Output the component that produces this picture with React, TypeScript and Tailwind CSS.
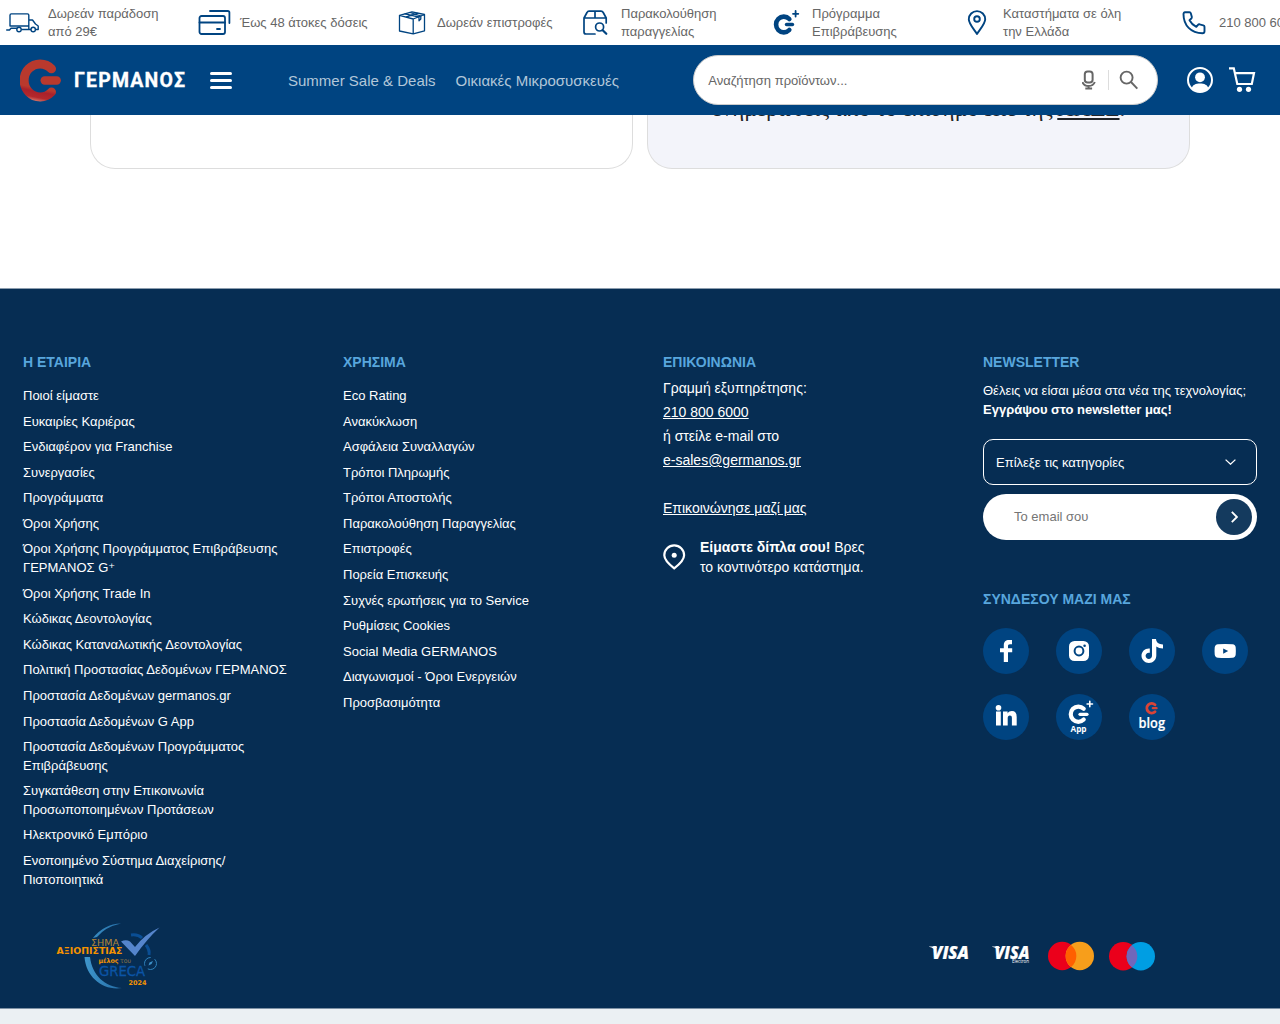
import React from "react";

const stroke = { fill: "none", stroke: "#004481", strokeLinecap: "round", strokeLinejoin: "round" } as const;

const benefits = [
  {
    w: "w-[192px]", gap: "w-[42px]", lines: ["Δωρεάν παράδοση", "από 29€"],
    icon: (
      <svg className="h-[22px] w-[34px] shrink-0" viewBox="0 0 34 22" {...stroke} strokeWidth="1.4">
        <path d="M4 13.800V3.200q0-1.300 1.300-1.300H21.500q1.300 0 1.300 1.300V14H4M.7 18H3.500L5 16.200H11M22.800 8H26.500L29.500 12l2.700 2v3.500H30M15.500 17.500H25M22.800 14v3.500" />
        <circle cx="13" cy="17.500" r="2.200" fill="white" /><circle cx="27.200" cy="17.500" r="2.200" fill="white" />
      </svg>
    ),
  },
  {
    w: "w-[200px]", gap: "w-[42px]", lines: ["Έως 48 άτοκες δόσεις"],
    icon: (
      <svg className="h-[26px] w-[33px] shrink-0" viewBox="0 0 33 26" {...stroke} strokeWidth="1.800">
        <rect x="1.500" y="6" width="25.500" height="18" rx="2" />
        <path d="M1.500 12.500H27M19 19h3M12 1H29.800q1.600 0 1.600 1.600V13" />
      </svg>
    ),
  },
  {
    w: "w-[184px]", gap: "w-[39px]", lines: ["Δωρεάν επιστροφές"],
    icon: (
      <svg className="h-6 w-7 shrink-0" viewBox="0 0 28 24" {...stroke} strokeWidth="1.300">
        <path d="M1.500 4.300 14 .8 26.500 3.500V19.800L15.200 22.800 1.500 20zM1.500 4.300 15.200 8 26.500 3.500M15.200 8V22.500" />
        <path d="M7 2.900 21 6v3.800l1.800-1.800V5L12 1.500M8.500 5.800 19.500 2.400" strokeWidth="1.300" />
      </svg>
    ),
  },
  {
    w: "w-[191px]", gap: "w-[39px]", lines: ["Παρακολούθηση", "παραγγελίας"],
    icon: (
      <svg className="h-[26px] w-[27px] shrink-0" viewBox="0 0 27 26" {...stroke} strokeWidth="1.700">
        <path d="M13 24H4q-2 0-2-2V8L5 2.500Q5.600 1.200 7 1.200H19q1.500 0 2.200 1.300L24.200 8v5M2 8H24.200M13 1.200V8" />
        <circle cx="17.600" cy="17" r="4" /><path d="M20.700 20.200 24.300 23.800" strokeWidth="2.200" />
      </svg>
    ),
  },
  {
    w: "w-[193px]", gap: "w-[39px]", lines: ["Πρόγραμμα", "Επιβράβευσης"],
    icon: (
      <svg className="h-[26px] w-7 shrink-0" viewBox="0 0 28 26" {...stroke}>
        <path d="M16.300 9A7.700 7.900 0 1 0 16.300 20" strokeWidth="4.600" />
        <path d="M13.500 14.500H19.500" strokeWidth="3.400" />
        <path d="M22.600 1v5.500M20 3.800h5.300" strokeWidth="1.800" />
      </svg>
    ),
  },
  {
    w: "w-[216px]", gap: "w-[37px]", lines: ["Καταστήματα σε όλη", "την Ελλάδα"],
    icon: (
      <svg className="h-[26px] w-[22px] shrink-0" viewBox="0 0 22 26" {...stroke} strokeWidth="1.900">
        <path d="M11 24C8.500 20 2.800 14 2.800 9.300a8.200 8.200 0 0 1 16.400 0C19.200 14 13.500 20 11 24z" />
        <circle cx="11" cy="9" r="2.800" />
      </svg>
    ),
  },
  {
    w: "w-[120px]", gap: "w-[37px]", lines: ["210 800 6000"],
    icon: (
      <svg className="h-6 w-6 shrink-0" viewBox="0 0 24 24" {...stroke} strokeWidth="1.900">
        <path d="M3 1.300H7.500Q8.500 1.300 8.800 2.300L9.800 5.800Q10 6.800 9.300 7.500L7.500 9.200Q10 13.800 14.300 15.800L16 13.800Q16.600 13.100 17.500 13.300L21.300 14.300Q22.500 14.600 22.500 15.800V20.300Q22.500 22.300 20.500 22.300C9 22.300 1.500 14.300 1.500 3.300Q1.500 1.300 3 1.300z" />
      </svg>
    ),
  },
];

const company = [
  ["Ποιοί είμαστε"], ["Ευκαιρίες Καριέρας"], ["Ενδιαφέρον για Franchise"], ["Συνεργασίες"], ["Προγράμματα"], ["Όροι Χρήσης"],
  ["Όροι Χρήσης Προγράμματος Επιβράβευσης", "ΓΕΡΜΑΝΟΣ G⁺"], ["Όροι Χρήσης Trade In"], ["Κώδικας Δεοντολογίας"],
  ["Κώδικας Καταναλωτικής Δεοντολογίας"], ["Πολιτική Προστασίας Δεδομένων ΓΕΡΜΑΝΟΣ"], ["Προστασία Δεδομένων germanos.gr"],
  ["Προστασία Δεδομένων G App"], ["Προστασία Δεδομένων Προγράμματος", "Επιβράβευσης"],
  ["Συγκατάθεση στην Επικοινωνία", "Προσωποποιημένων Προτάσεων"], ["Ηλεκτρονικό Εμπόριο"],
  ["Ενοποιημένο Σύστημα Διαχείρισης/", "Πιστοποιητικά"],
];
const useful = [
  ["Eco Rating"], ["Ανακύκλωση"], ["Ασφάλεια Συναλλαγών"], ["Τρόποι Πληρωμής"], ["Τρόποι Αποστολής"],
  ["Παρακολούθηση Παραγγελίας"], ["Επιστροφές"], ["Πορεία Επισκευής"], ["Συχνές ερωτήσεις για το Service"],
  ["Ρυθμίσεις Cookies"], ["Social Media GERMANOS"], ["Διαγωνισμοί - Όροι Ενεργειών"], ["Προσβασιμότητα"],
];

const Heading = ({ children }: { children: React.ReactNode }) => (
  <h3 className="whitespace-nowrap text-[14px] leading-5 font-bold text-[#58a6dd]">{children}</h3>
);

const Links = ({ items }: { items: string[][] }) => (
  <ul className="mt-[15px] flex flex-col gap-[7px] text-[13px] leading-[18.58px] font-['Liberation_Sans','DejaVu_Sans',sans-serif]">
    {items.map((lines) => (
      <li key={lines[0]}>
        {lines.map((l) => <span key={l} className="block h-[18.58px] whitespace-nowrap">{l}</span>)}
      </li>
    ))}
  </ul>
);

const socials = [
  <path key="f" d="M20.800 34V24.300H17V20.200h3.800V17.300c0-3.600 2-5.300 5.200-5.300h3v4.200H27c-1.600 0-2 .7-2 2.100v1.900h4.200v4.100H25V34z" fill="white" />,
  <g key="i"><rect x="13" y="13" width="20" height="20" rx="5.500" fill="white" /><circle cx="23" cy="23" r="4.400" fill="none" stroke="#004481" strokeWidth="2" /><circle cx="28.600" cy="17.700" r="1.300" fill="#004481" /></g>,
  <path key="t" d="M23 11h4c.3 3.400 2.600 5.200 7 5.400V20.500c-2.700 0-5-.7-6.700-2v9c0 4.200-3.200 7.500-7.400 7.500-4 0-7.400-3.200-7.400-7.200 0-4.300 3.700-7.700 8.300-7.200v4.200c-2.400-.6-4.200.9-4.200 3 0 1.800 1.400 3.200 3.200 3.200s3.200-1.400 3.200-3.300z" fill="white" />,
  <g key="y"><path d="M16 16.200Q23 15.600 30.500 16.200 33.500 16.400 33.700 19.500 34 23 33.700 26.500 33.500 29.600 30.500 29.800 23 30.400 16 29.800 13 29.600 12.700 26.500 12.400 23 12.700 19.500 13 16.400 16 16.200z" fill="white" /><path d="M21.200 20.500v5.200l5-2.600z" fill="#004481" /></g>,
  <g key="l" fill="white"><circle cx="15.500" cy="13.800" r="2.800" /><path d="M13 17.500h4.800v14H13zM20 17.500h4.600v1.900c1-1.500 2.500-2.300 4.300-2.300 3.200 0 4.800 2 4.800 5.800v8.600h-4.800v-7.500c0-1.700-.6-2.500-2-2.500s-2.200 1-2.200 2.700v7.300H20z" /></g>,
  <g key="g" stroke="white" fill="none" strokeLinecap="round"><path d="M27.700 14.800A7.600 7.600 0 1 0 27.700 25.600" strokeWidth="4.200" /><path d="M24 20.300h7" strokeWidth="3.200" /><path d="M33.800 7.300v5.400M31.100 10h5.400" strokeWidth="1.600" /><text x="14.500" y="38.300" fill="white" stroke="none" fontFamily="Open Sans" fontWeight="700" fontSize="8.200" textLength="16">App</text></g>,
  <g key="b" stroke="#d84438" fill="none" strokeLinecap="round"><path d="M26 10.700A4.800 4.800 0 1 0 26 17.700" strokeWidth="2.900" /><path d="M23.800 14.200h3.800" strokeWidth="2.200" /><text x="9.500" y="33.800" fill="white" stroke="white" strokeWidth=".2" fontFamily="Open Sans" fontWeight="600" fontSize="15" textLength="26.500" lengthAdjust="spacingAndGlyphs">blog</text></g>,
];

const Visa = ({ electron = false }: { electron?: boolean }) => (
  <svg className="h-5 w-[42px]" viewBox="0 0 42 20" fill="white">
    <path d="M1 2.500h6q1.700 0 2.200 1.500L5.500 4.700Q3.800 3.300 1 2.800z" />
    <text x={electron ? 3.500 : 4} y="15.300" stroke="white" strokeWidth=".2" fontFamily="Open Sans" fontStyle="italic" fontWeight="800" fontSize="17.500" textLength={electron ? 35 : 37} lengthAdjust="spacingAndGlyphs">VISA</text>
    {electron && <text x="21" y="19.300" fontFamily="Open Sans" fontSize="4.500" textLength="17">Electron</text>}
  </svg>
);

export default function App() {
  return (
    <div className="flex h-[1024px] w-[1280px] flex-col overflow-hidden bg-white font-['Liberation_Sans',Arial,sans-serif]">
      <div className="flex h-[45px] shrink-0 items-center overflow-hidden pl-[6px] text-[13px] leading-[18px] text-[#666]">
        {benefits.map((b) => (
          <div key={b.lines[0]} className={`flex shrink-0 items-center ${b.w}`}>
            <div className={`flex shrink-0 ${b.gap}`}>{b.icon}</div>
            <div className="whitespace-nowrap">{b.lines.map((l) => <div key={l}>{l}</div>)}</div>
          </div>
        ))}
      </div>

      <header className="flex h-[70px] shrink-0 items-center bg-[#004481] pl-5">
        <svg className="h-[44px] w-[167px]" viewBox="0 0 167 44" fill="none">
          <defs>
            <linearGradient id="red" gradientUnits="userSpaceOnUse" x1="26" y1="2" x2="18" y2="43"><stop offset=".7" stopColor="#b9392d" /><stop offset=".78" stopColor="#a9212b" /><stop offset=".92" stopColor="#b3282c" /><stop offset="1" stopColor="#cf6a60" /></linearGradient>
          </defs>
          <path d="M31.500 10.800A16 16.500 0 1 0 31.500 34" stroke="url(#red)" strokeWidth="9" strokeLinecap="round" />
          <path d="M24.700 22.500H36.700" stroke="#b9392d" strokeWidth="8.400" strokeLinecap="round" />
          <text x="54" y="29.200" fill="white" stroke="white" strokeWidth=".3" fontFamily="Roboto" fontSize="19.500" fontWeight="700" textLength="111">ΓΕΡΜΑΝΟΣ</text>
        </svg>
        <div className="ml-[23px] flex w-[22px] flex-col gap-[4px]">
          <span className="h-[3px] rounded-full bg-white" /><span className="h-[3px] rounded-full bg-white" /><span className="h-[3px] rounded-full bg-white" />
        </div>
        <nav className="ml-14 flex w-[404.500px] gap-5 pt-[2px] whitespace-nowrap text-[15px] text-[#b2c7d9]">
          <span>Summer Sale &amp; Deals</span><span>Οικιακές Μικροσυσκευές</span>
        </nav>
        <div className="flex h-[50px] w-[465.500px] items-center rounded-full border border-[#ccc] bg-white pl-[14.800px] text-[13px] text-[#666]">
          <span className="w-[374px] pt-[2px]">Αναζήτηση προϊόντων...</span>
          <svg className="h-5 w-[14px]" viewBox="0 0 14 20" fill="none" stroke="#666" strokeWidth="2">
            <rect x="2.800" y="1.500" width="7.800" height="11" rx="2.800" /><path d="M.4 12Q2 16 6.600 16T12.800 12M6.600 16V18.500M3.300 18.600h6.800" />
          </svg>
          <span className="ml-[12px] h-5 w-px bg-[#ddd]" />
          <svg className="ml-[10px] h-5 w-5" viewBox="0 0 20 20" fill="none" stroke="#666" strokeWidth="1.900"><circle cx="7.600" cy="7.600" r="6" /><path d="m12 12 6.300 6.600" /></svg>
        </div>
        <svg className="ml-[28px] h-7 w-7" viewBox="0 0 28 28" fill="white">
          <circle cx="14" cy="14" r="12" fill="none" stroke="white" strokeWidth="2" /><circle cx="14" cy="11.300" r="4.900" /><path d="M5.800 22.500C6 18.700 10 17.400 14 17.400s8 1.300 8.200 5.100Q14 29.500 5.800 22.500z" />
        </svg>
        <svg className="ml-[14px] h-7 w-7" viewBox="0 0 28 28" fill="none" stroke="white" strokeWidth="2.200">
          <path d="M1 2.300H5.800L9.300 18H23.800L26 7.200H7" /><circle cx="11.500" cy="23.300" r="2.600" fill="white" stroke="none" /><circle cx="20.500" cy="23.300" r="2.600" fill="white" stroke="none" />
        </svg>
      </header>

      <main className="flex h-[173px] shrink-0 gap-[14px] px-[90px]">
        <div className="h-[53.500px] w-[543px] rounded-b-[25px] border border-t-0 border-[#ddd]" />
        <div className="h-[53.500px] w-[543px] overflow-hidden rounded-b-[25px] border border-t-0 border-[#ddd] bg-[#f3f4fa]">
          <p className="-mt-[21px] whitespace-nowrap pl-16 font-['Liberation_Serif',serif] text-[23px] leading-[30px] tracking-[0.040px] text-[#212529]">ενημερωθείς από το επίσημο site της <u className="decoration-2 underline-offset-2">ΑΑΔΕ</u>.</p>
        </div>
      </main>

      <footer className="flex h-[720px] shrink-0 flex-col border-t border-[#8c9dae] bg-[#062d53] text-white">
        <div className="grid h-[620px] grid-cols-4 pt-[63px]">
          <section className="pl-[23px]"><Heading>Η ΕΤΑΙΡΙΑ</Heading><Links items={company} /></section>
          <section className="pl-[23px]"><Heading>ΧΡΗΣΙΜΑ</Heading><Links items={useful} /></section>
          <section className="pl-[23px] text-[14px] leading-6">
            <Heading>ΕΠΙΚΟΙΝΩΝΙΑ</Heading>
            <div className="mt-[4px]">Γραμμή εξυπηρέτησης:</div>
            <div><a className="underline">210 800 6000</a></div>
            <div>ή στείλε e-mail στο</div>
            <div><a className="underline">e-sales@germanos.gr</a></div>
            <div className="mt-6"><a className="underline">Επικοινώνησε μαζί μας</a></div>
            <div className="mt-[17px] flex items-center leading-5">
              <svg className="mr-[14px] h-[26px] w-[23px]" viewBox="0 0 23 26" fill="none" stroke="white" strokeWidth="2.200">
                <path d="M11.200 24.300C7 21 1.300 16.500 1.300 11.200a9.900 9.900 0 0 1 19.800 0C21.100 16.500 15.500 21 11.200 24.300z" /><circle cx="11.200" cy="11.300" r="2.500" fill="white" stroke="none" />
              </svg>
              <div><b>Είμαστε δίπλα σου!</b> Βρες<br />το κοντινότερο κατάστημα.</div>
            </div>
          </section>
          <section className="pl-[23px]">
            <Heading>NEWSLETTER</Heading>
            <p className="mt-[10px] whitespace-nowrap text-[13px] leading-[18.57px]">Θέλεις να είσαι μέσα στα νέα της τεχνολογίας;<br /><b>Εγγράψου στο newsletter μας!</b></p>
            <div className="mt-[19.400px] flex h-[46px] w-[274px] items-center justify-between rounded-[10px] border border-white px-3 text-[13px]">
              <span className="pt-[2px]">Επίλεξε τις κατηγορίες</span>
              <svg className="mr-2 h-[6px] w-[11px]" viewBox="0 0 11 6" fill="none" stroke="white" strokeWidth="1.300"><path d="M.6.600 5.500 5.200 10.400.600" /></svg>
            </div>
            <div className="mt-[9.600px] flex h-[46px] w-[274px] items-center justify-between rounded-full bg-white pr-[5px] pl-[31px] text-[13px] text-[#757575]">
              <span>Το email σου</span>
              <span className="flex h-9 w-9 items-center justify-center rounded-full bg-[#143a5e]">
                <svg className="h-3 w-[7px]" viewBox="0 0 7 12" fill="none" stroke="white" strokeWidth="1.800"><path d="M.8.800 5.900 6 .8 11.200" /></svg>
              </span>
            </div>
            <div className="mt-[48.400px]"><Heading>ΣΥΝΔΕΣΟΥ ΜΑΖΙ ΜΑΣ</Heading></div>
            <div className="mt-[19px] grid w-[265px] grid-cols-[73px_73px_73.300px_46px] gap-y-5">
              {socials.map((s, i) => <svg key={i} className="h-[46px] w-[46px]" viewBox="0 0 46 46"><circle cx="23" cy="23" r="23" fill="#004481" />{s}</svg>)}
            </div>
          </section>
        </div>
        <div className="flex items-start pl-[54px]">
          <svg className="mt-[12px] h-[70px] w-[108px]" viewBox="0 0 108 70" fontFamily="DejaVu Sans, sans-serif">
            <defs><linearGradient id="seal" x1="0" x2="1"><stop stopColor="#3f96cc" /><stop offset="1" stopColor="#246ca5" /></linearGradient></defs>
            <path d="M39 17Q50 3 67 2.500Q51 6 43 16zM30.500 36C32 57 50 70 68 67C51 66 38 54 36 36z" fill="url(#seal)" />
            <path d="M77 14Q84 13 88 17M92 24Q96 29 95 34" fill="none" stroke="#0a4e94" strokeWidth="3" />
            <path d="M67 20.500Q72 18 76 20.500L81 26Q91 13 105.500 6.500Q93 18 81 35z" fill="#5585cc" />
            <text x="37" y="24.500" fontSize="9.500" fill="#b38538" textLength="28" lengthAdjust="spacingAndGlyphs">ΣΗΜΑ</text>
            <text x="2.500" y="32.500" fontSize="9" fontWeight="700" fill="#f39200" textLength="66" lengthAdjust="spacingAndGlyphs">ΑΞΙΟΠΙΣΤΙΑΣ</text>
            <text x="44.500" y="42.300" fontSize="6.500" fontWeight="700" fill="#f39200" textLength="20" lengthAdjust="spacingAndGlyphs">μέλος</text>
            <text x="66" y="42.300" fontSize="6.500" fill="#8c7446" textLength="11" lengthAdjust="spacingAndGlyphs">του</text>
            <text x="45" y="54.500" fontSize="13.300" fill="#0b54a5" stroke="#0b54a5" strokeWidth=".3" textLength="46" lengthAdjust="spacingAndGlyphs">GRECA</text>
            <circle cx="96.500" cy="42.500" r="6" fill="none" stroke="#2f83bd" strokeDasharray="12 4" /><path d="m94.500 44.500 1-3 3.500-1.500-1.500 3z" fill="#3d91c9" />
            <text x="74.500" y="63.500" fontSize="6.500" fontWeight="700" fill="#f39200" textLength="18" lengthAdjust="spacingAndGlyphs">2024</text>
          </svg>
          <div className="ml-[766px] flex pt-[35px]">
            <Visa /><div className="ml-[21px]"><Visa electron /></div>
            <svg className="-mt-[3px] ml-[15px] h-[30px] w-[46px]" viewBox="0 0 46 30"><circle cx="14.200" cy="15" r="14.200" fill="#eb001b" /><circle cx="31.800" cy="15" r="14.200" fill="#f79e1b" /><path d="M23 3.900a14.200 14.200 0 0 1 0 22.200a14.200 14.200 0 0 1 0-22.200" fill="#ff5f00" /></svg>
            <svg className="-mt-[3px] ml-[15px] h-[30px] w-[46px]" viewBox="0 0 46 30"><circle cx="14.200" cy="15.300" r="14.200" fill="#eb001b" /><circle cx="31.800" cy="15.300" r="14.200" fill="#009ee3" /><path d="M23 4.200a14.200 14.200 0 0 1 0 22.200a14.200 14.200 0 0 1 0-22.200" fill="#7067bb" /></svg>
          </div>
        </div>
      </footer>
      <div className="h-4 shrink-0 border-t border-[#7d91a5] bg-[#ebf0f3]" />
    </div>
  );
}
